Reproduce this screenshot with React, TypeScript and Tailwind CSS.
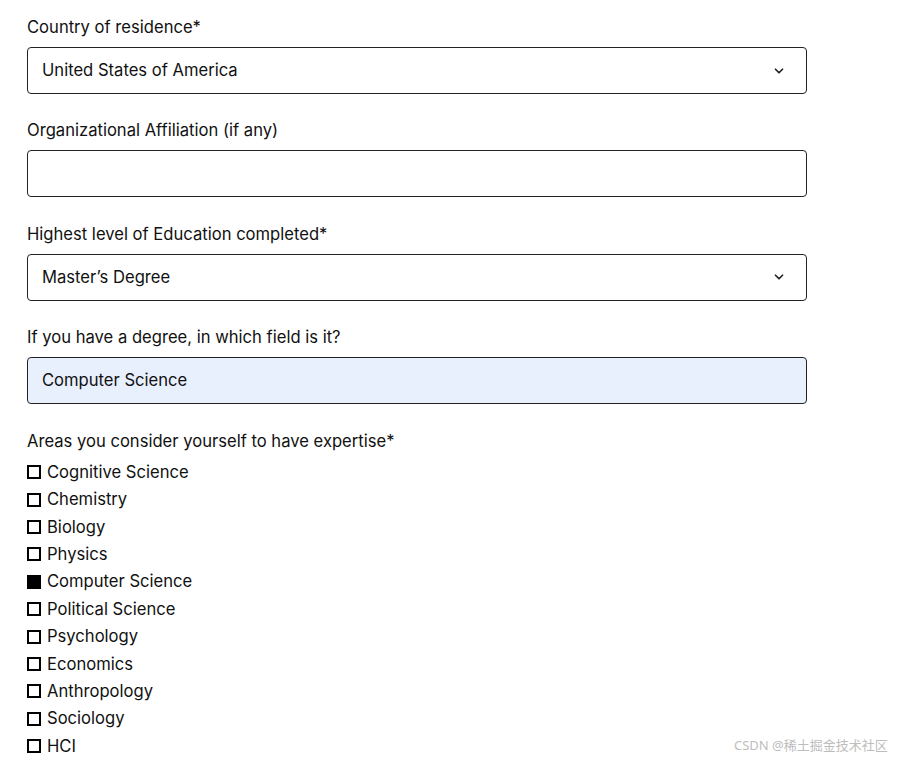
import { FiChevronDown } from "react-icons/fi";

const areas = [
  { name: "Cognitive Science", checked: false },
  { name: "Chemistry", checked: false },
  { name: "Biology", checked: false },
  { name: "Physics", checked: false },
  { name: "Computer Science", checked: true },
  { name: "Political Science", checked: false },
  { name: "Psychology", checked: false },
  { name: "Economics", checked: false },
  { name: "Anthropology", checked: false },
  { name: "Sociology", checked: false },
  { name: "HCI", checked: false },
];

function Label({ children, first }: { children: React.ReactNode; first?: boolean }) {
  return (
    <div className={`${first ? "" : "mt-[24.4px]"} h-6 leading-6 text-[16.6px] text-[#111]`}>
      {children}
    </div>
  );
}

function Field({
  value,
  select,
  filled,
}: {
  value?: string;
  select?: boolean;
  filled?: boolean;
}) {
  return (
    <div
      className={`mt-2 h-[47px] w-[780px] rounded-[4px] border border-[#222] flex items-center justify-between pl-[14px] pr-[20px] text-[16.6px] text-[#111] ${
        filled ? "bg-[#e8f0fe]" : "bg-white"
      }`}
    >
      <span>{value}</span>
      {select && <FiChevronDown className="w-[14px] h-[14px] text-[#222]" strokeWidth={3} />}
    </div>
  );
}

export default function App() {
  return (
    <div
      className="relative w-[897px] h-[762px] bg-white overflow-hidden"
      style={{ fontFamily: "Inter, 'Noto Sans', sans-serif" }}
    >
      <div className="flex flex-col pl-[27px] pt-[15px]">
        <Label first>Country of residence*</Label>
        <Field value="United States of America" select />
        <Label>Organizational Affiliation (if any)</Label>
        <Field />
        <Label>Highest level of Education completed*</Label>
        <Field value="Master’s Degree" select />
        <Label>If you have a degree, in which field is it?</Label>
        <Field value="Computer Science" filled />
        <Label>Areas you consider yourself to have expertise*</Label>
        <div className="mt-[6px] flex flex-col">
          {areas.map((a) => (
            <div key={a.name} className="h-[27.4px] flex items-center gap-[6px] text-[16.6px] text-[#111]">
              <span
                className={`w-[14px] h-[14px] border-2 border-black ${
                  a.checked ? "bg-black" : "bg-white"
                }`}
              />
              <span>{a.name}</span>
            </div>
          ))}
        </div>
      </div>
      <div
        className="absolute left-[734px] top-[736px] text-[13px] text-[#bdbdbd] whitespace-nowrap"
        style={{ fontFamily: "'Noto Sans', 'Noto Sans CJK SC', sans-serif" }}
      >
        CSDN @稀土掘金技术社区
      </div>
    </div>
  );
}
